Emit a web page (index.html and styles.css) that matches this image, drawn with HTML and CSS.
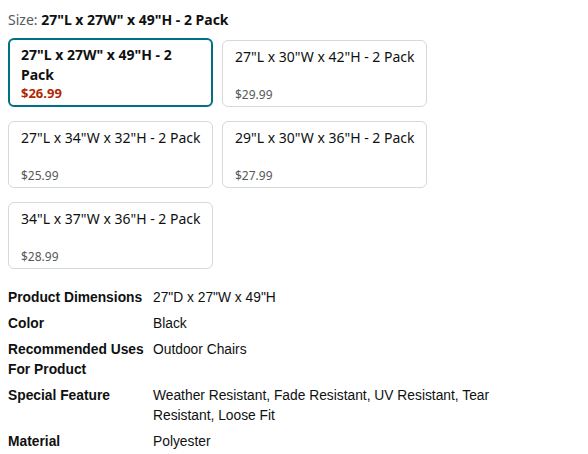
FILE: index.html
```html
<!DOCTYPE html>
<html>
<head>
<meta charset="utf-8">
<link rel="stylesheet" href="styles.css">
</head>
<body>
<div class="page">
  <div class="size-label">Size: <b>27"L x 27W" x 49"H - 2 Pack</b></div>
  <div class="chips">
    <div class="chip selected">
      <div class="chip-title">27"L x 27W" x 49"H - 2 Pack</div>
      <div class="chip-price">$26.99</div>
    </div>
    <div class="chip">
      <div class="chip-title">27"L x 30"W x 42"H - 2 Pack</div>
      <div class="chip-price">$29.99</div>
    </div>
    <div class="chip">
      <div class="chip-title">27"L x 34"W x 32"H - 2 Pack</div>
      <div class="chip-price">$25.99</div>
    </div>
    <div class="chip">
      <div class="chip-title">29"L x 30"W x 36"H - 2 Pack</div>
      <div class="chip-price">$27.99</div>
    </div>
    <div class="chip">
      <div class="chip-title">34"L x 37"W x 36"H - 2 Pack</div>
      <div class="chip-price">$28.99</div>
    </div>
  </div>
  <table class="specs">
    <tr><th>Product Dimensions</th><td>27"D x 27"W x 49"H</td></tr>
    <tr><th>Color</th><td>Black</td></tr>
    <tr><th><span class="nw">Recommended Uses</span> <span class="nw">For Product</span></th><td>Outdoor Chairs</td></tr>
    <tr><th>Special Feature</th><td>Weather Resistant, Fade Resistant, UV Resistant, Tear Resistant, Loose Fit</td></tr>
    <tr><th>Material</th><td>Polyester</td></tr>
  </table>
</div>
</body>
</html>
```
FILE: styles.css
```css
* { box-sizing: border-box; }
body {
  margin: 0;
  background: #fff;
  color: #0f1111;
  font-family: "Noto Sans", "Open Sans", sans-serif;
  font-size: 14px;
}
.page {
  padding: 10px 8px 0 8px;
}
.size-label {
  font-size: 14px;
  line-height: 20px;
  color: #565959;
}
.size-label b {
  color: #0f1111;
  font-weight: 700;
}
.chips {
  margin-top: 8px;
  display: grid;
  grid-template-columns: 205px 205px;
  column-gap: 9px;
  row-gap: 14px;
  align-items: end;
}
.chip {
  height: 67px;
  border: 1px solid #d5d9d9;
  border-radius: 6px;
  padding: 6px 4px 3px 12px;
  display: flex;
  flex-direction: column;
  justify-content: space-between;
}
.chip.selected {
  height: 69px;
  border: 2px solid #007185;
  padding: 5px 11px 4px 11px;
}
.chip-title {
  font-size: 14px;
  line-height: 20px;
  color: #0f1111;
  white-space: nowrap;
}
.selected .chip-title {
  font-weight: 700;
  line-height: 20px;
  white-space: normal;
}
.chip-price {
  font-size: 12px;
  line-height: 16px;
  color: #565959;
}
.selected .chip-price {
  font-weight: 700;
  color: #b12704;
  font-size: 13px;
}
.specs {
  margin-top: 16px;
  border-collapse: collapse;
  font-family: "Liberation Sans", Arial, sans-serif;
}
.specs th, .specs td {
  vertical-align: top;
  padding: 3px 0;
  line-height: 20px;
  font-size: 13.8px;
  text-align: left;
}
.specs th {
  width: 145px;
  padding-right: 8px;
  font-weight: 700;
}
.nw {
  white-space: nowrap;
}
.specs td {
  width: 350px;
}
```
